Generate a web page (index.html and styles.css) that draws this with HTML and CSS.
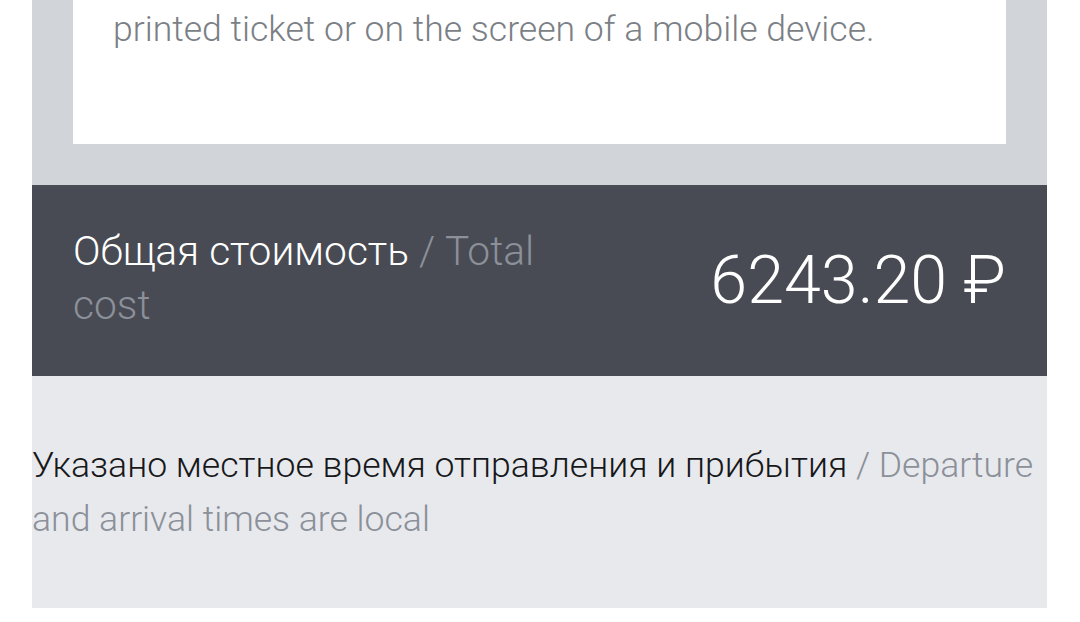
FILE: index.html
```html
<!DOCTYPE html>
<html lang="ru">
<head>
<meta charset="utf-8">
<link rel="stylesheet" href="styles.css">
</head>
<body>
<main class="page">
  <section class="info">
    <div class="card">
      <p class="card-text">printed ticket or on the screen of a mobile device.</p>
    </div>
  </section>
  <section class="total">
    <div class="total-label"><span class="ru">Общая стоимость</span> <span class="en">/ Total cost</span></div>
    <div class="total-price">6243.20 ₽</div>
  </section>
  <section class="note">
    <p class="note-text"><span class="ru">Указано местное время отправления и прибытия</span> <span class="en">/ Departure and arrival times are local</span></p>
  </section>
</main>
</body>
</html>
```
FILE: styles.css
```css
html, body {
  margin: 0;
  padding: 0;
  background: #ffffff;
}
body {
  font-family: Roboto, "Liberation Sans", sans-serif;
  font-weight: 300;
  width: 1080px;
  height: 622px;
  overflow: hidden;
}
.page {
  margin: 0 33px 0 32px;
}
.info {
  background: #d1d5d9;
  padding: 0 41px 41px 41px;
}
.card {
  background: #ffffff;
  padding: 2px 40px 88px 40px;
}
.card-text {
  margin: 0;
  font-size: 35.6px;
  line-height: 54px;
  color: #7b7f86;
}
.total {
  background: #484b53;
  display: flex;
  align-items: center;
  justify-content: space-between;
  padding: 0 41px;
  height: 191px;
  box-sizing: border-box;
}
.total-label {
  width: 470px;
  font-size: 40.7px;
  line-height: 54px;
  padding-bottom: 6px;
  color: #ffffff;
}
.total-label .en,
.note-text .en {
  color: #8b9099;
}
.total-price {
  font-size: 66.4px;
  color: #ffffff;
  white-space: nowrap;
  padding-bottom: 2px;
}
.note {
  background: #e8e9ed;
  padding: 62px 0 62px 0;
}
.note-text {
  margin: 0;
  font-size: 35.6px;
  line-height: 54px;
  color: #17181a;
}
```
